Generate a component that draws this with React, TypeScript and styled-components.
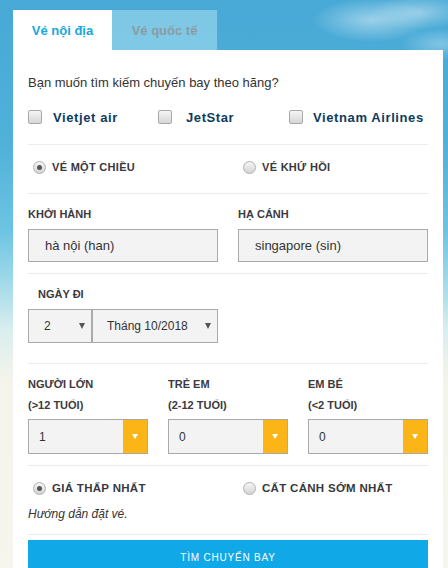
import React, { useState } from 'react';
import styled, { createGlobalStyle } from 'styled-components';

const GlobalStyle = createGlobalStyle`
  html, body {
    margin: 0;
    padding: 0;
  }
  body {
    min-height: 568px;
    font-family: 'Liberation Sans', Arial, sans-serif;
    background:
      radial-gradient(ellipse 60px 22px at 372px 20px, rgba(255, 255, 255, 0.45), rgba(255, 255, 255, 0) 100%),
      radial-gradient(ellipse 50px 18px at 420px 12px, rgba(255, 255, 255, 0.4), rgba(255, 255, 255, 0) 100%),
      radial-gradient(ellipse 40px 16px at 440px 44px, rgba(255, 255, 255, 0.3), rgba(255, 255, 255, 0) 100%),
      linear-gradient(
        180deg,
        #48a9d6 0px,
        #4fb0da 140px,
        #6cc4e2 230px,
        #9fd9e9 280px,
        #d9eeee 330px,
        #f4f4ea 380px,
        #f6f6ee 568px
      );
    background-repeat: no-repeat;
  }
`;

const Page = styled.div`
  padding: 10px 5px 0 13px;
`;

const Tabs = styled.div`
  display: flex;
`;

const Tab = styled.div<{ $active?: boolean }>`
  height: 40px;
  width: ${(p) => (p.$active ? '99px' : '105px')};
  display: flex;
  align-items: center;
  justify-content: center;
  font-size: 13px;
  font-weight: bold;
  color: ${(p) => (p.$active ? '#18a7e0' : '#8a9ba3')};
  background: ${(p) => (p.$active ? '#ffffff' : 'rgba(180, 230, 245, 0.5)')};
  cursor: pointer;
`;

const Panel = styled.div`
  background: #ffffff;
  padding: 0 15px;
  min-height: 530px;
`;

const Section = styled.div<{ $top: number; $bottom: number }>`
  padding: ${(p) => p.$top}px 0 ${(p) => p.$bottom}px;
  border-bottom: 1px solid #ececec;
`;

const Intro = styled.div`
  font-size: 13px;
  line-height: 18px;
  color: #333;
`;

const AirlineRow = styled.div`
  display: grid;
  grid-template-columns: 130px 131px 1fr;
  margin-top: 16px;
  height: 18px;
`;

const CheckLabel = styled.label`
  display: flex;
  align-items: center;
  font-size: 13px;
  font-weight: bold;
  letter-spacing: 0.6px;
  color: #0d3b5e;
  cursor: pointer;
`;

const CheckBox = styled.span<{ $gap: number }>`
  width: 12px;
  height: 12px;
  border: 1px solid #a8a8a8;
  border-radius: 2px;
  background: linear-gradient(180deg, #f4f4f4, #d6d6d6);
  margin-right: ${(p) => p.$gap}px;
  flex: none;
`;

const RadioRow = styled.div`
  display: grid;
  grid-template-columns: 210px 1fr;
  height: 18px;
`;

const RadioLabel = styled.label<{ $size: number }>`
  display: flex;
  align-items: center;
  padding-left: 5px;
  font-size: ${(p) => p.$size}px;
  font-weight: bold;
  letter-spacing: 0.3px;
  color: #383840;
  cursor: pointer;
`;

const RadioDot = styled.span<{ $checked?: boolean }>`
  position: relative;
  width: 11px;
  height: 11px;
  border: 1px solid #b0b0b0;
  border-radius: 50%;
  background: linear-gradient(180deg, #f6f6f6, #d4d4d4);
  margin-right: 6px;
  flex: none;

  &::after {
    content: '';
    display: ${(p) => (p.$checked ? 'block' : 'none')};
    position: absolute;
    left: 3px;
    top: 3px;
    width: 5px;
    height: 5px;
    border-radius: 50%;
    background: #555;
  }
`;

const FieldGrid = styled.div<{ $cols: number }>`
  display: grid;
  grid-template-columns: repeat(${(p) => p.$cols}, 1fr);
  column-gap: 20px;
`;

const FieldLabel = styled.div<{ $indent?: number }>`
  font-size: 11px;
  font-weight: bold;
  line-height: 16px;
  color: #3a3a40;
  padding-left: ${(p) => p.$indent || 0}px;
  & + & {
    margin-top: 5px;
  }
`;

const TextBox = styled.div`
  margin-top: 7px;
  height: 31px;
  border: 1px solid #aaaaaa;
  background: #f3f3f3;
  display: flex;
  align-items: center;
  padding-left: 16px;
  font-size: 13px;
  color: #333;
`;

const DateRow = styled.div`
  display: flex;
  margin-top: 7px;
`;

const DateSelect = styled.div<{ $width: number; $pad: number }>`
  width: ${(p) => p.$width}px;
  height: 34px;
  box-sizing: border-box;
  border: 1px solid #aaaaaa;
  background: #f3f3f3;
  display: flex;
  align-items: center;
  justify-content: space-between;
  padding: 0 6px 0 ${(p) => p.$pad}px;
  font-size: 12px;
  color: #333;
  & + & {
    border-left: 1px solid #aaaaaa;
  }
`;

const SmallArrow = styled.span`
  width: 0;
  height: 0;
  border-left: 3px solid transparent;
  border-right: 3px solid transparent;
  border-top: 6px solid #555;
`;

const PaxSelect = styled.div`
  margin-top: 6px;
  height: 35px;
  box-sizing: border-box;
  border: 1px solid #aaaaaa;
  background: #f3f3f3;
  display: flex;
  align-items: stretch;
  font-size: 12px;
  color: #333;
`;

const PaxValue = styled.div`
  flex: 1;
  display: flex;
  align-items: center;
  padding-left: 10px;
`;

const PaxButton = styled.div`
  width: 24px;
  background: #fbb517;
  display: flex;
  align-items: center;
  justify-content: center;
`;

const WhiteArrow = styled.span`
  width: 0;
  height: 0;
  border-left: 3px solid transparent;
  border-right: 3px solid transparent;
  border-top: 5px solid #fff;
`;

const Guide = styled.div`
  margin-top: 8px;
  font-size: 12px;
  font-style: italic;
  line-height: 18px;
  color: #333;
`;

const SearchButton = styled.button`
  display: block;
  width: 100%;
  height: 34px;
  margin-top: 5px;
  border: none;
  background: #10a8e6;
  color: #fff;
  font-family: 'Liberation Sans', Arial, sans-serif;
  font-size: 10px;
  letter-spacing: 0.8px;
  cursor: pointer;
`;

const airlines = [
  { name: 'Vietjet air', gap: 11 },
  { name: 'JetStar', gap: 14 },
  { name: 'Vietnam Airlines', gap: 10 },
];

const pax = [
  { title: 'NGƯỜI LỚN', sub: '(>12 TUỔI)', value: '1' },
  { title: 'TRẺ EM', sub: '(2-12 TUỔI)', value: '0' },
  { title: 'EM BÉ', sub: '(<2 TUỔI)', value: '0' },
];

const App = () => {
  const [tab, setTab] = useState(0);
  const [trip, setTrip] = useState(0);
  const [sort, setSort] = useState(0);

  return (
    <Page>
      <GlobalStyle />
      <Tabs>
        <Tab $active={tab === 0} onClick={() => setTab(0)}>
          Vé nội địa
        </Tab>
        <Tab $active={tab === 1} onClick={() => setTab(1)}>
          Vé quốc tế
        </Tab>
      </Tabs>
      <Panel>
        <Section $top={24} $bottom={18}>
          <Intro>Bạn muốn tìm kiếm chuyến bay theo hãng?</Intro>
          <AirlineRow>
            {airlines.map((a) => (
              <CheckLabel key={a.name}>
                <CheckBox $gap={a.gap} />
                {a.name}
              </CheckLabel>
            ))}
          </AirlineRow>
        </Section>

        <Section $top={13} $bottom={17}>
          <RadioRow>
            <RadioLabel $size={11} onClick={() => setTrip(0)}>
              <RadioDot $checked={trip === 0} />
              VÉ MỘT CHIỀU
            </RadioLabel>
            <RadioLabel $size={11} onClick={() => setTrip(1)}>
              <RadioDot $checked={trip === 1} />
              VÉ KHỨ HỒI
            </RadioLabel>
          </RadioRow>
        </Section>

        <Section $top={12} $bottom={11}>
          <FieldGrid $cols={2}>
            <div>
              <FieldLabel>KHỞI HÀNH</FieldLabel>
              <TextBox>hà nội (han)</TextBox>
            </div>
            <div>
              <FieldLabel>HẠ CÁNH</FieldLabel>
              <TextBox>singapore (sin)</TextBox>
            </div>
          </FieldGrid>
        </Section>

        <Section $top={12} $bottom={20}>
          <FieldLabel $indent={10}>NGÀY ĐI</FieldLabel>
          <DateRow>
            <DateSelect $width={64} $pad={15}>
              2 <SmallArrow />
            </DateSelect>
            <DateSelect $width={126} $pad={14}>
              Tháng 10/2018 <SmallArrow />
            </DateSelect>
          </DateRow>
        </Section>

        <Section $top={12} $bottom={11}>
          <FieldGrid $cols={3}>
            {pax.map((p) => (
              <div key={p.title}>
                <FieldLabel>{p.title}</FieldLabel>
                <FieldLabel>{p.sub}</FieldLabel>
                <PaxSelect>
                  <PaxValue>{p.value}</PaxValue>
                  <PaxButton>
                    <WhiteArrow />
                  </PaxButton>
                </PaxSelect>
              </div>
            ))}
          </FieldGrid>
        </Section>

        <Section $top={13} $bottom={11}>
          <RadioRow>
            <RadioLabel $size={11.5} onClick={() => setSort(0)}>
              <RadioDot $checked={sort === 0} />
              GIÁ THẤP NHẤT
            </RadioLabel>
            <RadioLabel $size={11.5} onClick={() => setSort(1)}>
              <RadioDot $checked={sort === 1} />
              CẤT CÁNH SỚM NHẤT
            </RadioLabel>
          </RadioRow>
          <Guide>Hướng dẫn đặt vé.</Guide>
        </Section>

        <SearchButton>TÌM CHUYẾN BAY</SearchButton>
      </Panel>
    </Page>
  );
};

export default App;
